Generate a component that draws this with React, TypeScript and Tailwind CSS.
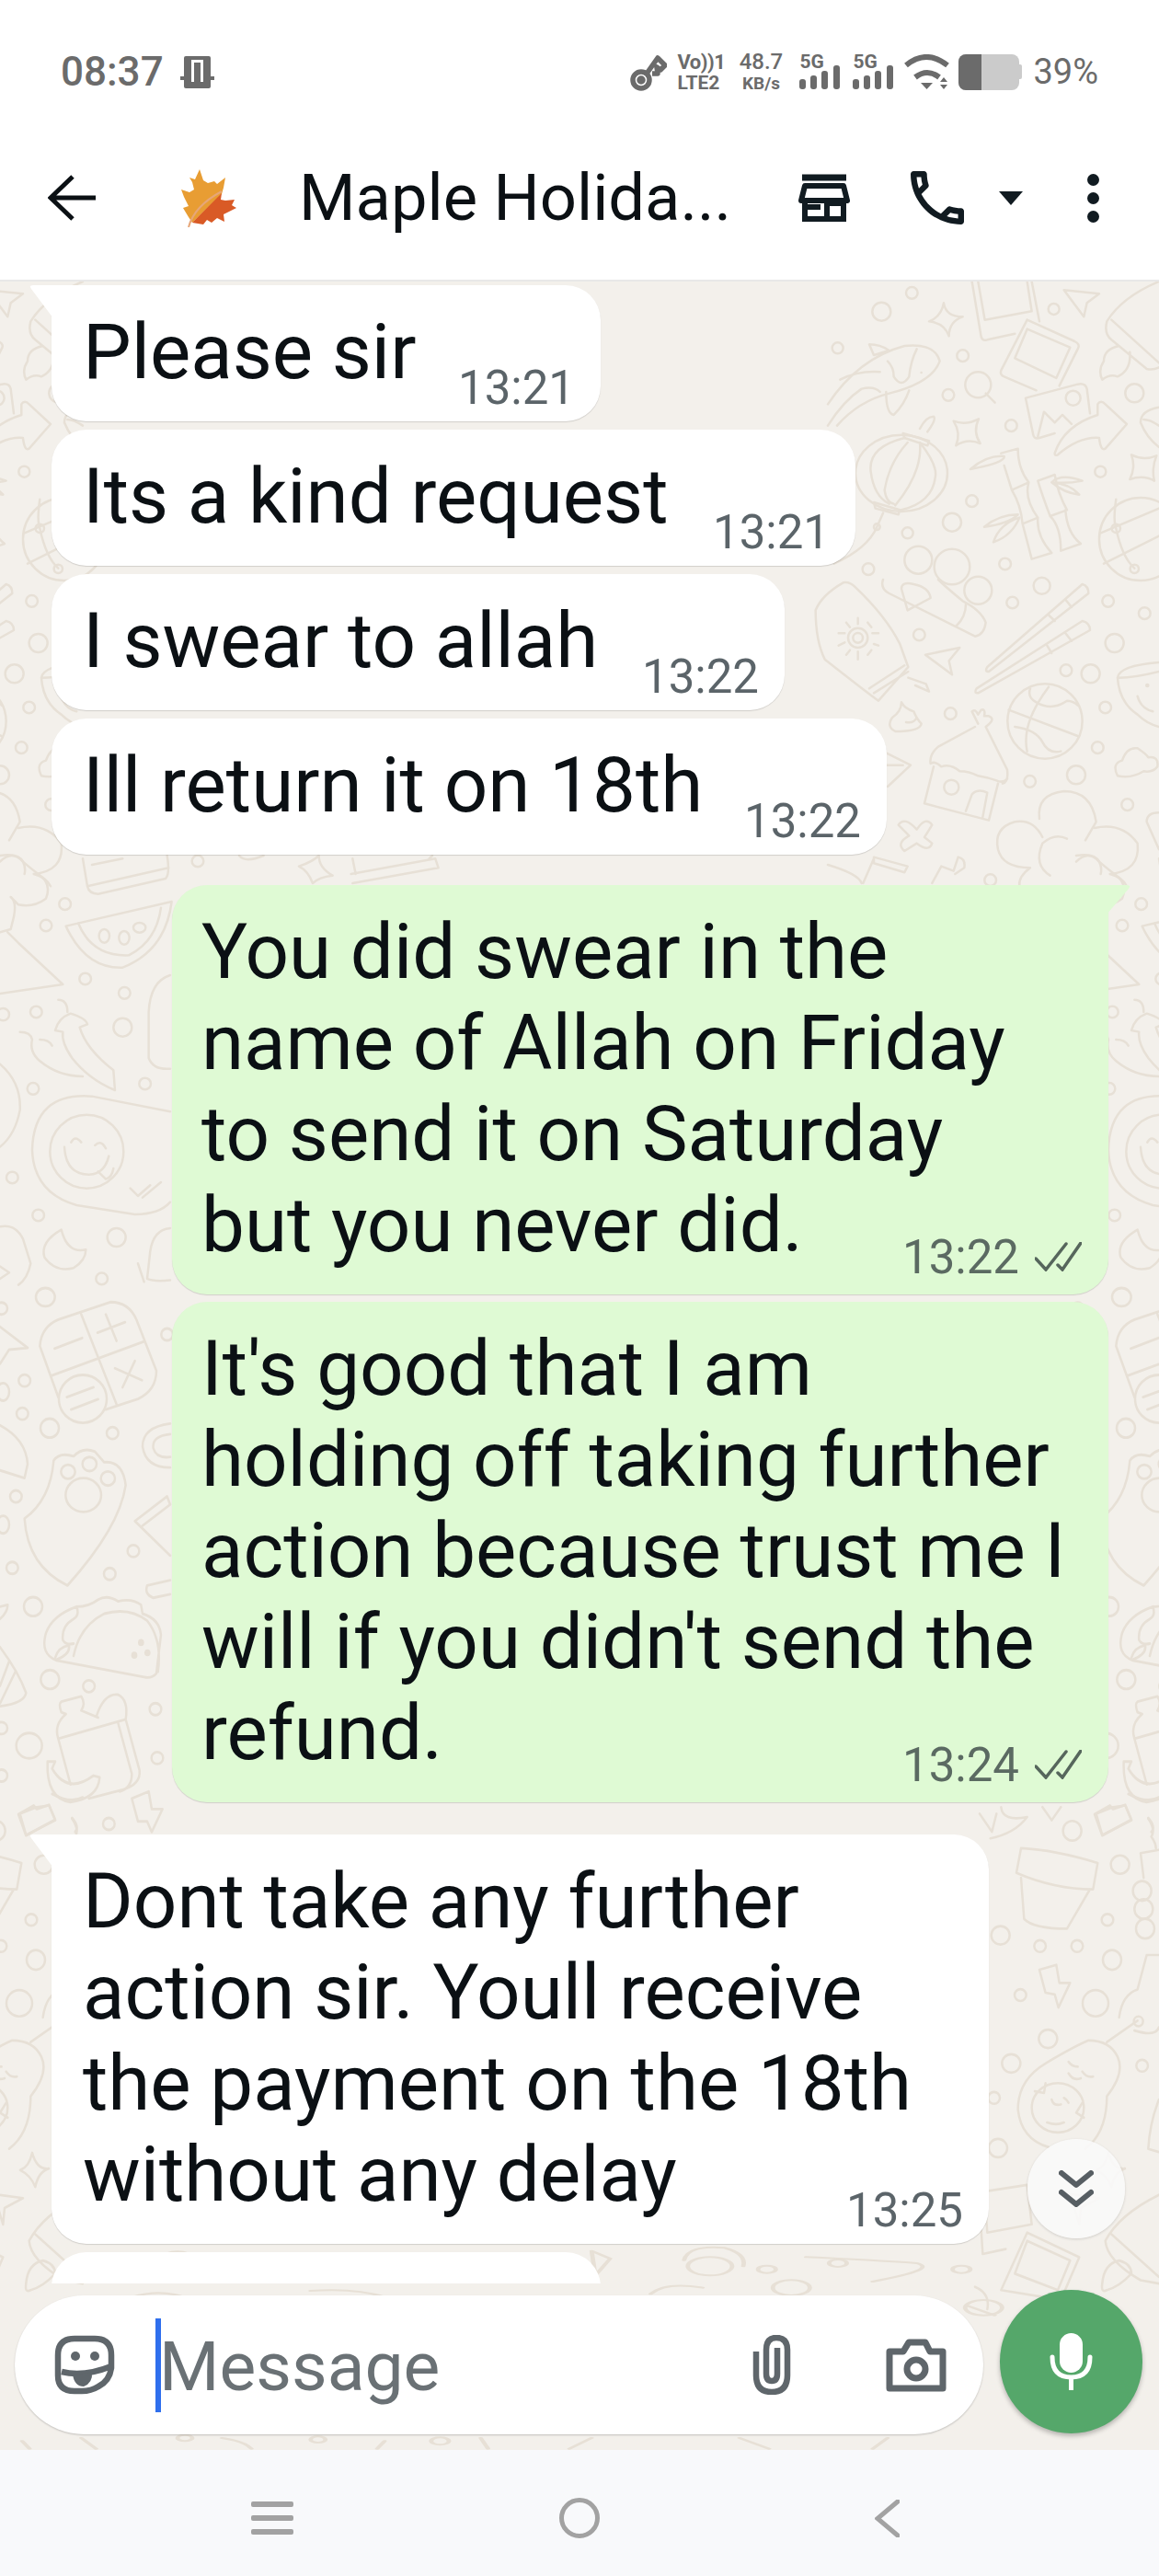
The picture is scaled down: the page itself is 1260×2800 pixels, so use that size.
import React from "react"

type Ring = [number, number, number, number?]

function Doodles({ id, paths, rings, dots, sw = 7.5 }: { id: string; paths: string[]; rings: Ring[]; dots?: Ring[]; sw?: number }) {
  return (
    <g id={id} fill="none" strokeWidth={sw} strokeLinecap="round" strokeLinejoin="round">
      {paths.map((d, i) => (
        <path key={i} d={d} />
      ))}
      {rings.map(([cx, cy, rx, ry], i) => (
        <ellipse key={i} cx={cx} cy={cy} rx={rx} ry={ry ?? rx} />
      ))}
      {dots?.map(([cx, cy, rx, ry], i) => (
        <ellipse key={i} cx={cx} cy={cy} rx={rx} ry={ry ?? rx} fill="#e7e0d6" stroke="none" />
      ))}
    </g>
  )
}

const topRight = {
  paths: [
    "M378 70Q385 115 440 115Q395 130 395 178Q380 135 330 130Q370 115 378 70Z",
    "M410 455Q450 470 492 448Q472 490 497 528Q455 510 418 535Q435 495 410 455Z",
    "M990 565Q1030 585 1072 568Q1055 610 1065 650Q1030 630 985 645Q1005 605 990 565Z",
    "M470 0L500 180Q505 195 520 190L610 170M665 0L690 130M490 0L512 125L665 97L650 0",
    "M650 125L805 195Q825 205 815 220L755 340M650 125L565 290Q560 305 575 310L680 355M650 155L790 215L745 315L610 250Z",
    "M645 380L815 335Q840 330 845 350L855 430M645 380L670 500Q672 515 690 510L740 495M685 505L705 425L740 460L765 435L795 465",
    "M740 560Q770 470 880 435L880 400Q890 385 905 400L975 465L905 545Q890 555 885 510Q820 505 750 565Q740 570 740 560Z",
    "M770 28L885 40L845 70L835 115Z",
    "M1080 0Q960 50 910 130Q900 170 925 190L1040 285Q1060 290 1080 280M925 125L1080 265M950 210Q900 220 900 260Q880 290 895 320Q920 300 945 310Q990 290 985 230",
    "M0 400Q100 250 250 210Q350 200 365 260Q340 330 200 365Q100 390 30 470M135 205Q170 205 200 225L150 240ZM290 220Q270 260 265 310Q240 350 215 310Q215 280 195 260M190 360Q190 430 215 435Q250 400 265 355M40 320Q100 290 170 295M0 470Q50 390 110 350Q150 340 170 360",
    "M245 495L330 520L325 535L250 510ZM150 720L235 745L230 760L155 740ZM300 480Q320 440 345 440Q355 450 325 490M180 755L160 800Q130 870 20 920",
    "M250 510Q130 540 140 620Q150 700 200 725M300 525Q360 600 350 640Q340 720 240 745M260 525Q200 590 185 680Q190 720 215 725M300 525Q310 620 220 730",
    "M575 600L600 680Q630 730 635 790L665 905L730 885Q680 830 685 770Q640 710 655 655Q620 610 620 545L565 560M600 680L655 655M635 790L685 770",
    "M685 650L740 630Q750 690 780 745L725 765Q700 700 685 650M725 765Q760 800 760 878L825 855Q780 820 775 745",
    "M465 612Q520 565 575 570Q580 590 465 612M730 655Q760 625 830 650Q780 660 730 655M730 655Q790 660 820 695Q770 690 730 655M510 800Q560 760 620 760Q590 790 510 800M540 850Q560 790 625 770Q600 830 540 850",
    "M890 820L1080 740M900 920L1080 830M940 805Q930 780 940 710M940 805Q960 900 1000 935",
    "M1080 410Q1020 420 1020 460Q1040 510 1080 540M1030 450Q1050 450 1080 470",
    "M515 365L545 395",
  ],
  rings: [
    [175, 98, 30], [274, 37, 19], [32, 217, 18], [440, 242, 19], [737, 90, 18], [393, 370, 19], [598, 470, 19],
    [1000, 364, 30], [889, 620, 18], [470, 716, 19], [405, 785, 30], [260, 820, 18], [132, 938, 19], [578, 921, 19],
    [295, 908, 45], [405, 930, 58], [490, 337, 42], [240, 625, 150, 125], [160, 800, 10], [1020, 840, 135],
    [940, 805, 14], [1000, 937, 14], [800, 380, 24],
  ] as Ring[],
  dots: [[305, 297, 4]] as Ring[],
}

const midRight = {
  paths: [
    "M-10 260Q-40 200-40 100Q-20 50 50 10Q70 5 90 25Q190 120 235 210L262 285L165 395Q130 370-10 260ZM135 355L250 280M150 370L262 300M262 320L320 340L330 365L285 345",
    "M98 125V145M98 235V260M35 175H55M145 175H165M60 140L72 155M130 140L142 155M60 245L72 230M130 245L142 230M35 215L55 205M150 210L165 215",
    "M318 245L430 222L395 265L405 310Z",
    "M180 0Q170 30 200 45L480 185Q510 180 515 140Q500 100 440 70Q380 20 360 0M240 30Q240 5 280 15Q330 25 335 60L260 100ZM420 150Q450 120 450 80",
    "M520 285L830 15Q850 20 850 45L525 300Q510 300 520 285M485 355L830 135Q855 140 855 165L490 370Q475 370 485 355M775 65L795 90M720 115L740 135M775 175L795 200M715 215L730 240",
    "M590 425L815 510M660 355Q650 385 680 400Q730 430 780 395Q800 395 815 410M650 560Q630 470 720 350M610 480Q680 490 700 530Q720 570 760 560",
    "M945 320Q950 280 1080 270M945 320Q950 400 1010 440Q1040 470 1080 480M950 320Q1000 320 1080 300M1010 380Q1020 420 1060 430",
    "M240 400Q250 420 280 430Q290 455 305 470Q300 495 220 495Q190 480 210 450Q240 430 240 400ZM255 465Q280 470 290 450",
    "M490 470L470 430Q480 420 490 440L500 425Q515 420 510 445L525 445Q550 455 515 480L585 620Q590 660 570 665M480 480L360 545Q330 570 335 600Q350 590 370 610Q400 600 430 625Q460 625 490 640Q520 645 550 655Q570 665 585 650",
    "M345 610L315 730L525 785L555 665M450 755L470 700Q490 680 520 695L505 775",
    "M230 800Q250 770 290 815Q320 770 340 800Q325 825 315 840L340 860Q330 890 290 860L250 885Q220 860 265 835Z",
    "M945 640Q925 600 960 590Q975 545 1010 550Q1040 570 1045 580Q1080 575 1075 610Q1060 630 1030 625Q990 650 945 640Z",
    "M700 840Q670 780 610 790Q540 810 555 880Q570 940 660 940Q620 970 625 1000M690 780Q680 700 770 690Q860 690 875 790L840 850M870 810Q960 790 1010 860Q1020 950 920 960Q960 970 975 1000M780 845Q740 825 700 860Q670 930 725 965M810 920Q850 880 885 920Q895 940 890 960",
    "M190 565L270 605L195 675M190 605L245 605",
    "M0 930Q100 960 110 990M150 905L260 935L250 955L150 925ZM150 910L115 990M340 990L370 935L410 950L425 905Q450 910 445 940L415 960",
    "M1080 760Q1040 760 1040 790L1080 880",
  ],
  rings: [
    [490, 35, 45], [698, 20, 27], [602, 75, 19], [914, 70, 19], [1033, 110, 19], [298, 180, 19], [935, 207, 30],
    [777, 296, 19], [857, 307, 30], [400, 437, 19], [905, 417, 19], [880, 548, 19], [659, 658, 19], [810, 637, 30],
    [977, 734, 19], [403, 677, 24], [530, 980, 19], [98, 190, 32], [98, 190, 16], [708, 462, 122],
  ] as Ring[],
  dots: [[1042, 345, 7]] as Ring[],
}

const upperLeft = {
  paths: [
    "M0 90Q60 80 75 110Q110 140 125 150Q170 180 150 230Q110 260 60 250L35 225Q55 240 45 290L35 330L0 340M25 340L60 375L205 510L0 540",
    "M270 100L285 190Q290 215 320 215L540 165Q555 150 545 90M300 120L400 100M285 190L550 130",
    "M215 320L560 240Q540 400 400 455Q280 460 215 320ZM255 310Q300 420 420 415Q510 370 525 260",
    "M180 660Q190 620 230 605Q280 620 285 640L260 650Q280 720 370 790L375 855Q290 820 235 750Q200 700 205 665ZM190 560Q220 560 220 600M65 665Q100 665 105 690Q95 730 130 760Q190 810 270 810M130 690Q160 690 170 710",
    "M555 480Q490 500 485 600L485 750Q500 790 555 785",
    "M555 925L300 875Q110 860 105 1050Q110 1190 250 1230L440 1260Q520 1260 555 1220",
    "M210 1040Q215 1130 290 1130Q340 1130 355 1070M232 1025Q245 1000 265 1025M310 1035Q330 1015 345 1045M320 1120L345 1145Q365 1140 370 1110M425 1175L450 1200L490 1165M465 1205L525 1155",
    "M200 1310Q130 1350 145 1400Q180 1450 240 1435Q280 1410 280 1375Q220 1390 200 1310Z",
    "M0 1300Q50 1290 75 1340L100 1420Q90 1470 60 1490M0 1430L30 1450L0 1470M0 770Q70 830 65 920Q50 1000 0 1040",
    "M555 1305Q500 1310 490 1380L480 1470Q500 1480 555 1475M450 1420L470 1480",
    "M975 125Q1020 110 1040 90Q1040 130 1085 155Q1040 160 1020 180Q1005 140 975 125ZM1150 180L1430 130L1420 100L1145 150M1160 150L1150 100M1400 100L1410 90M780 90Q800 115 860 90",
  ],
  rings: [
    [212, 248, 19], [150, 318, 19], [278, 492, 19], [406, 538, 19], [118, 600, 19], [10, 608, 20], [400, 650, 30],
    [108, 850, 19], [473, 834, 19], [40, 1140, 19], [125, 1263, 19], [380, 1335, 30], [332, 1470, 19], [645, 108, 19],
    [340, 352, 17, 22], [405, 358, 17, 22], [455, 325, 20, 16], [283, 1055, 120],
  ] as Ring[],
}

const lowerLeft = {
  paths: [
    "M130 165Q135 110 190 90L360 40Q420 40 445 90L510 235Q510 290 450 315L345 345M130 165L190 310M265 75L380 330M165 250L470 152M218 310L305 282M232 345L320 316M178 172L268 142M318 127L408 97M345 75L380 150M375 228L463 262M440 207L400 282",
    "M80 655Q165 600 175 490Q195 465 240 478Q270 450 310 465Q335 490 340 495Q400 490 410 560Q390 680 220 845Q90 790 80 655Z",
    "M0 110L90 170L30 175L0 215M555 385Q465 395 465 450Q475 510 555 510M555 415Q495 420 500 455Q510 485 555 480M440 662L545 592L555 615L465 675M440 662L555 760M555 830L480 845Q470 870 500 880L555 870M0 390Q85 430 90 500L80 540L0 518",
    "M185 1058Q130 1040 150 980Q170 930 250 905Q290 905 320 885Q350 870 385 890Q430 880 460 900L465 925Q520 940 525 985L510 1095Q495 1110 470 1105ZM240 1045Q260 960 340 925Q420 905 480 945Q530 1000 515 1090M250 905Q260 930 240 940Q200 960 205 1000Q215 1015 240 1010M180 1050Q190 1020 225 1015Q230 1040 185 1055",
    "M190 1280Q175 1240 215 1210L200 1205Q190 1180 200 1175L265 1160Q280 1180 265 1200L320 1220M190 1280L410 1225L455 1370Q460 1410 400 1425L290 1450M190 1280L230 1410M315 1215Q340 1150 385 1155Q420 1170 410 1225M385 1235L430 1380Q430 1420 390 1430",
    "M155 1345L180 1345L170 1365Q220 1440 305 1385L325 1390Q320 1450 230 1460Q150 1450 155 1345Z",
    "M0 1020Q60 1090 85 1150Q80 1180 0 1188M0 1130L30 1060M0 1180L50 1090M0 940Q25 920 25 900L0 905",
    "M430 1450L485 1430L495 1480L530 1480L495 1545L480 1515L450 1515ZM60 1495L110 1470L120 1480L160 1468L180 1510L85 1555ZM235 1505Q260 1530 245 1545",
  ],
  rings: [
    [270, 315, 78, 68], [272, 588, 58, 48], [222, 522, 23, 20], [292, 500, 23, 20], [352, 541, 23, 20],
    [148, 26, 31, 26], [5, 58, 19, 17], [80, 263, 19, 17], [73, 357, 19, 17], [162, 398, 30, 27], [367, 412, 19, 17],
    [545, 132, 19, 17], [52, 592, 19, 17], [435, 747, 19, 17], [358, 812, 19, 17], [10, 672, 20, 25], [40, 795, 19, 17],
    [108, 905, 30, 27], [163, 1112, 30, 27], [290, 1131, 19, 17], [507, 1196, 19, 17], [95, 1300, 42, 36], [513, 1335, 19, 17],
    [355, 1522, 19, 17], [5, 1250, 19, 17], [5, 1385, 19, 17], [10, 295, 20, 25],
  ] as Ring[],
  dots: [[460, 1007, 10], [438, 1043, 10], [481, 1036, 10]] as Ring[],
}

const lowerRight = {
  paths: [
    "M150 165Q260 170 400 210L385 290Q260 290 135 240ZM150 255L160 380Q190 410 300 410L375 290",
    "M210 535L265 520L275 575L310 575L272 650L260 610L230 605ZM395 60L450 40L490 35L510 80L415 125Z",
    "M140 960Q140 870 230 820Q320 770 370 750Q440 750 465 800Q490 850 430 920Q430 1030 360 1080M140 960Q150 1050 240 1075M430 755L445 745L530 690M470 680Q480 610 530 595L560 490L600 490M520 720Q590 740 600 710",
    "M305 815Q315 830 335 830M305 850Q320 875 345 865M350 845Q365 865 385 860M235 1000Q265 1010 290 1000M250 930Q255 950 280 945M290 925Q300 930 305 940M195 905L225 910L230 880M350 940L330 970L355 985",
    "M540 180L600 170M540 180L550 255M565 75Q590 110 575 130Q590 150 590 165M85 40Q90 85 170 70Q130 120 50 135M15 60L55 115L70 60M220 40L250 80L280 40M500 0Q560 30 600 10",
    "M30 1210L170 1190L185 1310L40 1335ZM15 1250L25 1400L100 1385M170 1335L340 1410L280 1540L85 1510ZM170 1360L310 1420L270 1510L130 1460Z",
    "M600 1220Q470 1280 425 1360Q430 1420 540 1480L600 1490M445 1340L600 1470M470 1420Q420 1430 415 1490Q410 1520 430 1510Q470 1500 510 1460Q510 1430 470 1420",
    "M435 1092Q450 1145 489 1140Q455 1150 445 1196Q430 1160 396 1145Q425 1135 435 1092ZM310 1218L405 1230L345 1260L340 1310Z",
    "M600 930Q570 1000 565 1080L600 1090M0 1500Q50 1520 40 1568",
  ],
  rings: [
    [317, 112, 30], [473, 215, 30, 28], [432, 383, 19, 18], [212, 463, 19, 18], [333, 463, 19, 18], [447, 505, 30],
    [148, 612, 19, 18], [393, 637, 42, 40], [238, 745, 30, 28], [118, 820, 30, 28], [545, 827, 19, 18], [83, 430, 30, 28],
    [62, 925, 19, 18], [75, 1078, 30, 28], [270, 955, 85, 75], [533, 692, 15], [545, 295, 30], [550, 350, 30], [555, 410, 30],
  ] as Ring[],
}

const bottomBand = {
  paths: [
    "M800 440L825 465L805 520ZM925 470Q930 420 980 430Q1010 450 1005 490M1090 460Q1180 470 1240 480Q1270 500 1180 540M880 580Q900 540 950 560M1310 620L1345 650M180 590Q220 560 260 600M600 450L560 520M690 460L720 520M420 570Q480 560 520 590",
    "M30 1060L40 1085M110 1050L130 1085M300 1050Q330 1060 340 1085M520 1060L510 1085M650 1050L660 1085M800 1050L770 1085M1000 1050L1040 1085M1200 1050L1180 1085",
  ],
  rings: [
    [960, 490, 30], [1037, 500, 12], [1133, 480, 12], [1300, 500, 12], [1070, 560, 25], [1330, 625, 25], [440, 480, 12], [240, 460, 18], [595, 1060, 12], [250, 1050, 10], [430, 1055, 10],
  ] as Ring[],
}

function Wallpaper() {
  return (
    <svg className="absolute left-0 top-0 w-[1260px] h-[2357px]" viewBox="0 306 1260 2357" stroke="#e7e0d6">
      <g transform="translate(900 306) scale(.3333)">
        <Doodles id="d-top" {...topRight} />
      </g>
      <g transform="translate(900 630) scale(.3333)">
        <Doodles id="d-mid" {...midRight} />
      </g>
      <g transform="translate(-270 306) scale(.3333)">
        <use href="#d-top" />
      </g>
      <g transform="translate(-270 630) scale(.3333)">
        <use href="#d-mid" />
      </g>
      <g transform="translate(0 900) scale(.3333)">
        <Doodles id="d-ul" {...upperLeft} />
      </g>
      <g transform="translate(1170 900) scale(.3333)">
        <use href="#d-ul" />
      </g>
      <g transform="translate(0 1400) scale(.3333 .3827)">
        <Doodles id="d-ll" {...lowerLeft} />
      </g>
      <g transform="translate(1170 1400) scale(.3333 .3827)">
        <use href="#d-ll" />
      </g>
      <g transform="translate(1060 1950) scale(.3333 .3571)">
        <Doodles id="d-lr" {...lowerRight} />
      </g>
      <g transform="translate(-110 1950) scale(.3333 .3571)">
        <use href="#d-lr" />
      </g>
      <g transform="translate(0 2300) scale(.804 .3333)">
        <Doodles id="d-bb" {...bottomBand} sw={6} />
      </g>
    </svg>
  )
}

function Bars() {
  return (
    <svg className="w-[44px] h-[26px]" viewBox="0 0 44 26" fill="#6b6b6b">
      <rect x="0" y="15" width="7" height="11" rx="3" />
      <rect x="12" y="11" width="7" height="15" rx="3" />
      <rect x="24" y="6" width="7" height="20" rx="3" />
      <rect x="37" y="0" width="7" height="26" rx="3" />
    </svg>
  )
}

function Signal() {
  return (
    <div className="relative w-[44px] h-[38px] flex items-end">
      <Bars />
      <span className="absolute left-0 top-[0px] text-[21px] leading-[17px] font-bold text-[#6b6b6b]">5G</span>
    </div>
  )
}

function StatusBar() {
  return (
    <div className="h-[156px] flex items-center pl-[66px] pr-[66px] text-[#6b6b6b]">
      <span className="text-[44px] leading-none font-medium">08:37</span>
      <svg className="ml-[18px] w-[37px] h-[35px]" viewBox="0 0 37 35" fill="#6b6b6b">
        <rect x="4" y="0" width="29" height="35" rx="2" />
        <rect x="12" y="4" width="13" height="24" fill="#fff" />
        <rect x="15" y="7" width="7" height="28" />
        <rect x="0" y="22" width="8" height="4" />
        <rect x="29" y="22" width="8" height="4" />
      </svg>
      <div className="ml-auto flex items-center">
        <svg className="w-[40px] h-[42px]" viewBox="0 0 40 42" fill="none" stroke="#6b6b6b" strokeWidth="5.5" strokeLinejoin="round">
          <circle cx="12" cy="30" r="9" />
          <path d="M18 23L30 6L38 14L33 19L29 16L30 23L24 23" />
          <circle cx="12" cy="30" r="2" fill="#6b6b6b" />
        </svg>
        <div className="ml-[11px] w-[48px] flex flex-col gap-[5px] font-bold">
          <span className="text-[22px] leading-[19px] whitespace-nowrap tracking-[-0.5px]">Vo))1</span>
          <span className="text-[21px] leading-[17px]">LTE2</span>
        </div>
        <div className="ml-[20px] w-[46px] flex flex-col items-center gap-[5px] font-medium">
          <span className="text-[24px] leading-[19px]">48.7</span>
          <span className="text-[19px] leading-[17px] font-bold">KB/s</span>
        </div>
        <div className="ml-[19px]">
          <Signal />
        </div>
        <div className="ml-[14px]">
          <Signal />
        </div>
        <svg className="ml-[12px] w-[49px] h-[38px]" viewBox="0 0 49 38" fill="none" stroke="#6b6b6b" strokeWidth="6">
          <path d="M2 12Q24 -6 47 12" />
          <path d="M12 25Q25 15 38 25" />
          <path d="M18 31H31L24.5 38Z" fill="#6b6b6b" stroke="none" />
          <path d="M39 30L43 25L47 30ZM39 33L43 38L47 33Z" fill="#6b6b6b" stroke="none" />
        </svg>
        <div className="ml-[10px] flex items-center">
          <div className="w-[66px] h-[39px] rounded-[8px] overflow-hidden flex bg-[#cbcbcb]">
            <div className="w-[25px] bg-[#6b6b6b]" />
          </div>
          <div className="w-[3px] h-[16px] bg-[#cbcbcb] rounded-r-[2px]" />
        </div>
        <span className="ml-[12px] text-[38px] leading-none">39%</span>
      </div>
    </div>
  )
}

function MapleLeaf() {
  return (
    <svg className="w-[60px] h-[63px]" viewBox="0 0 60 63">
      <path d="M20 0L24 12L29 15L36 13L39 16L48 9L46 20L44 27L12 58L8 52L2 42L8 40L3 30L0 22L9 25L14 22L12 14L9 9L15 11Z" fill="#e89d33" />
      <path d="M44 26L43 33L48 34L58 33L55 39L60 42L50 47L46 49L47 57L39 53L33 58L28 55L24 60L12 58Z" fill="#d95a26" />
      <path d="M8 63Q14 40 44 24" fill="none" stroke="#e6a678" strokeWidth="2" />
    </svg>
  )
}

function Header() {
  return (
    <div className="h-[150px] pb-[30px] border-b-2 border-[#e8e8e8] flex items-center text-[#0b1014]">
      <svg className="ml-[52px] w-[52px] h-[50px]" viewBox="0 0 52 50" fill="none" stroke="#0b1014" strokeWidth="5">
        <path d="M27 2L3 25L27 48M3 25H52" />
      </svg>
      <div className="ml-[93px]">
        <MapleLeaf />
      </div>
      <span className="ml-[68px] text-[70.5px] leading-none">Maple Holida...</span>
      <svg className="ml-auto w-[56px] h-[52px]" viewBox="0 0 56 52" fill="none" stroke="#111b21" strokeWidth="6">
        <path d="M4 4H52" strokeWidth="7" />
        <path d="M7 13H49L53 29H3Z" strokeLinejoin="round" />
        <path d="M7 29V49H49V29" />
        <path d="M31 30V49M31 32H48" />
        <path d="M7 36H24" />
      </svg>
      <svg className="ml-[65px] w-[60px] h-[58px]" viewBox="3 3 18 18" fill="#111b21">
        <path d="M6.54 5c.06.89.21 1.76.45 2.59l-1.2 1.2c-.41-1.2-.67-2.47-.76-3.79h1.51m9.86 12.02c.85.24 1.72.39 2.6.45v1.49c-1.32-.09-2.59-.35-3.8-.75l1.2-1.19M7.5 3H4c-.55 0-1 .45-1 1 0 9.39 7.61 17 17 17 .55 0 1-.45 1-1v-3.49c0-.55-.45-1-1-1-1.24 0-2.45-.2-3.57-.57-.1-.04-.21-.05-.31-.05-.26 0-.51.1-.71.29l-2.2 2.2c-2.83-1.45-5.15-3.76-6.59-6.59l2.2-2.2c.28-.28.36-.67.25-1.02C8.7 6.45 8.5 5.25 8.5 4c0-.55-.45-1-1-1z" />
      </svg>
      <svg className="ml-[36px] w-[28px] h-[17px]" viewBox="0 0 28 17" fill="#111b21">
        <path d="M1 1H27L14 16Z" strokeLinejoin="round" />
      </svg>
      <div className="ml-[69px] mr-[65px] w-[13px] flex flex-col gap-[7px]">
        <div className="h-[13px] rounded-full bg-[#111b21]" />
        <div className="h-[13px] rounded-full bg-[#111b21]" />
        <div className="h-[13px] rounded-full bg-[#111b21]" />
      </div>
    </div>
  )
}

function DoubleCheck() {
  return (
    <svg className="w-[51px] h-[32px]" viewBox="0 0 51 32" fill="none" stroke="#56665c" strokeWidth="3.5" strokeLinecap="round">
      <path d="M1 18L12 30L34 2M25 25L30 30L50 1" />
    </svg>
  )
}

type BubbleProps = {
  lines: string[]
  time: string
  width: string
  mt?: string
  out?: boolean
  tail?: boolean
}

function Bubble({ lines, time, width, mt, out, tail }: BubbleProps) {
  return (
    <div className={`relative shrink-0 rounded-[38px] pt-[23px] pb-[12px] shadow-[0_1px_1px_rgba(0,0,0,0.14)] ${width} ${mt ?? ""} ${out ? "self-end mr-[55px] bg-[#dffad4] pl-[32px] pr-[29px]" : "ml-[56px] bg-white pl-[34px] pr-[28px]"} ${tail && !out ? "rounded-tl-none" : ""} ${tail && out ? "rounded-tr-none" : ""}`}>
      {tail && !out && (
        <svg className="absolute left-[-24px] top-0 w-[26px] h-[36px]" viewBox="0 0 26 36" fill="#fff">
          <path d="M26 0H4Q-1 0 2 4L26 36Z" />
        </svg>
      )}
      {tail && out && (
        <svg className="absolute right-[-24px] top-0 w-[26px] h-[32px]" viewBox="0 0 26 32" fill="#dffad4">
          <path d="M0 0H22Q27 0 24 4L0 32Z" />
        </svg>
      )}
      <div className="text-[83.5px] leading-[99px] text-[#0b1014] whitespace-nowrap">
        {lines.map((l, i) => (
          <div key={i}>{l}</div>
        ))}
      </div>
      <div className={`h-[50px] flex items-center justify-end gap-[17px] ${out ? "-mt-[40px] mb-[4px]" : "-mt-[36px]"}`}>
        <span className={`text-[51px] leading-none ${out ? "text-[#5b6a62]" : "text-[#5b6469]"}`}>{time}</span>
        {out && <DoubleCheck />}
      </div>
    </div>
  )
}

function Composer() {
  return (
    <div className="relative h-[181px] shrink-0 flex items-start pt-[7px]">
      <div className="ml-[16px] mt-[6px] w-[1053px] h-[151px] rounded-full bg-white shadow-[0_1px_2px_rgba(0,0,0,0.2)] flex items-center">
        <svg className="ml-[43px] w-[66px] h-[65px]" viewBox="0 0 66 65" fill="none" stroke="#5f666b" strokeWidth="6.5" strokeLinejoin="round">
          <path d="M22 4H44Q62 4 62 22V36Q60 50 48 56Q40 61 30 61H22Q4 61 4 44V22Q4 4 22 4Z" />
          <path d="M8 40Q32 46 62 34" />
          <path d="M20 43Q22 56 32 56Q42 52 41 41" fill="#5f666b" stroke="none" />
          <circle cx="23" cy="23" r="5" fill="#5f666b" stroke="none" />
          <circle cx="44" cy="23" r="5" fill="#5f666b" stroke="none" />
        </svg>
        <div className="ml-[44px] w-[6px] h-[102px] bg-[#2f6fed]" />
        <span className="-ml-[2px] pt-[4px] text-[75px] leading-none text-[#6a7175]">Message</span>
        <svg className="ml-auto w-[42px] h-[65px]" viewBox="0 0 42 65" fill="none" stroke="#5f666b" strokeWidth="6.5">
          <path d="M4 18V44Q4 62 21 62Q38 62 38 44V16Q38 3 26 3Q15 3 15 16V42Q15 50 21 50Q27 50 27 42V14" />
        </svg>
        <svg className="ml-[103px] mr-[40px] w-[66px] h-[58px]" viewBox="0 0 66 58" fill="none" stroke="#5f666b" strokeWidth="7" strokeLinejoin="round">
          <path d="M4 14H19L25 4H43L48 14H62V54H4Z" />
          <circle cx="33" cy="33" r="10" />
        </svg>
      </div>
      <div className="ml-[18px] w-[155px] h-[156px] rounded-full bg-[#55a76a] shadow-[0_3px_5px_rgba(0,0,0,0.25)] flex items-center justify-center">
        <svg className="w-[47px] h-[62px]" viewBox="0 0 47 62" fill="none" stroke="#fff">
          <rect x="11" y="0" width="25" height="43" rx="12.5" fill="#fff" stroke="none" />
          <path d="M3 26Q3 48 23.5 48Q44 48 44 26" strokeWidth="5" strokeLinecap="round" />
          <path d="M23.5 47V62" strokeWidth="5" />
        </svg>
      </div>
    </div>
  )
}

function NavBar() {
  return (
    <div className="h-[137px] bg-[#f8f9fb] flex items-center pt-[11px]">
      <div className="ml-[273px] w-[46px] flex flex-col gap-[9px]">
        <div className="h-[6px] rounded-[2px] bg-[#a2a2a2]" />
        <div className="h-[6px] rounded-[2px] bg-[#a2a2a2]" />
        <div className="h-[6px] rounded-[2px] bg-[#a2a2a2]" />
      </div>
      <div className="ml-[289px] w-[44px] h-[44px] rounded-full border-[5px] border-[#a2a2a2]" />
      <svg className="ml-[299px] w-[27px] h-[41px]" viewBox="0 0 27 41" fill="none" stroke="#a2a2a2" strokeWidth="5" strokeLinecap="round">
        <path d="M25 2L3 20.5L25 39" />
      </svg>
    </div>
  )
}

export default function App() {
  return (
    <div className="w-[1260px] h-[2800px] bg-white flex flex-col overflow-hidden [font-family:Roboto,sans-serif]">
      <StatusBar />
      <Header />
      <div className="relative h-[2357px] bg-[#f3f0eb] flex flex-col overflow-hidden">
        <Wallpaper />
        <div className="relative flex-1 overflow-hidden flex flex-col items-start pt-[4px]">
          <Bubble lines={["Please sir"]} time="13:21" width="w-[597px]" tail />
          <Bubble lines={["Its a kind request"]} time="13:21" width="w-[874px]" mt="mt-[9px]" />
          <Bubble lines={["I swear to allah"]} time="13:22" width="w-[797px]" mt="mt-[9px]" />
          <Bubble lines={["Ill return it on 18th"]} time="13:22" width="w-[908px]" mt="mt-[9px]" />
          <Bubble lines={["You did swear in the", "name of Allah on Friday", "to send it on Saturday", "but you never did."]} time="13:22" width="w-[1018px]" mt="mt-[33px]" out tail />
          <Bubble lines={["It's good that I am", "holding off taking further", "action because trust me I", "will if you didn't send the", "refund."]} time="13:24" width="w-[1018px]" mt="mt-[8px]" out />
          <Bubble lines={["Dont take any further", "action sir. Youll receive", "the payment on the 18th", "without any delay"]} time="13:25" width="w-[1019px]" mt="mt-[35px]" tail />
          <div className="ml-[56px] mt-[9px] w-[597px] h-[147px] shrink-0 rounded-[38px] bg-white" />
        </div>
        <div className="absolute right-[37px] bottom-[230px] w-[106px] h-[108px] rounded-full bg-[#f9f9f9]/90 shadow-[0_1px_3px_rgba(0,0,0,0.15)] flex items-center justify-center">
          <svg className="w-[38px] h-[40px]" viewBox="0 0 38 40" fill="none" stroke="#575e63" strokeWidth="6" strokeLinecap="round" strokeLinejoin="round">
            <path d="M3 3L19 16L35 3M3 24L19 37L35 24" />
          </svg>
        </div>
        <Composer />
      </div>
      <NavBar />
    </div>
  )
}
